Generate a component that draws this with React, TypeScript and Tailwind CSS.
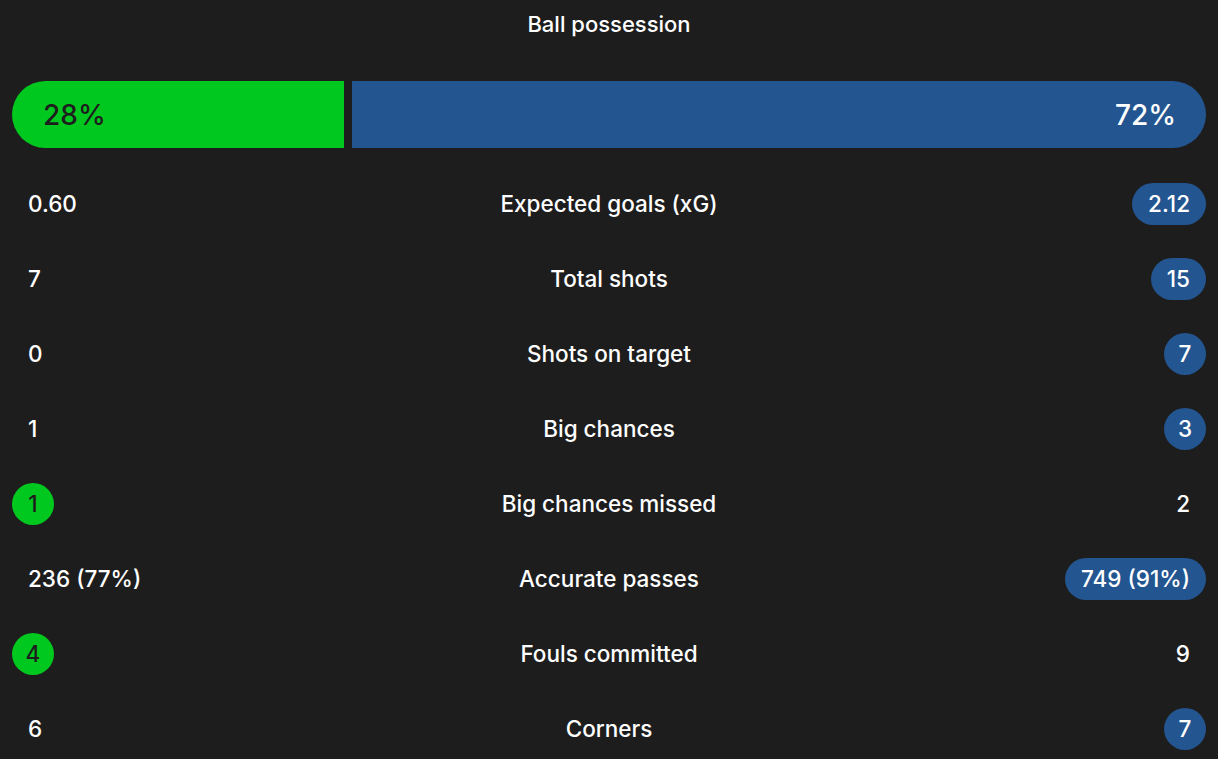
const home = 28;
const away = 72;

type Stat = {
  label: string;
  home: string;
  away: string;
  winner: 'home' | 'away';
};

const stats: Stat[] = [
  { label: 'Expected goals (xG)', home: '0.60', away: '2.12', winner: 'away' },
  { label: 'Total shots', home: '7', away: '15', winner: 'away' },
  { label: 'Shots on target', home: '0', away: '7', winner: 'away' },
  { label: 'Big chances', home: '1', away: '3', winner: 'away' },
  { label: 'Big chances missed', home: '1', away: '2', winner: 'home' },
  { label: 'Accurate passes', home: '236 (77%)', away: '749 (91%)', winner: 'away' },
  { label: 'Fouls committed', home: '4', away: '9', winner: 'home' },
  { label: 'Corners', home: '6', away: '7', winner: 'away' },
];

function Value({ value, highlight, side }: { value: string; highlight: boolean; side: 'home' | 'away' }) {
  if (!highlight) {
    return <span className="flex h-[42px] items-center px-4 text-white">{value}</span>;
  }
  const color = side === 'home' ? 'bg-[#00c81e] text-[#1d1d1d]' : 'bg-[#235591] text-white';
  const size = value.length === 1 ? 'w-[42px]' : 'px-4';
  return (
    <span className={`flex h-[42px] items-center justify-center rounded-full ${size} ${color}`}>
      {value}
    </span>
  );
}

export default function App() {
  return (
    <main
      className="min-h-screen bg-[#1d1d1d] px-3 text-white"
      style={{ fontFamily: 'Inter, "Noto Sans", sans-serif' }}
    >
      <h2 className="flex h-12 items-center justify-center text-[22px] font-medium">Ball possession</h2>

      <div className="mt-[33px] flex h-[67px] gap-2 text-[28px] font-medium">
        <div
          className="flex shrink-0 items-center rounded-l-full bg-[#00c81e] pl-[31px] text-[#1d1d1d]"
          style={{ width: `calc((100% - 8px) * ${home / 100})` }}
        >
          {home}%
        </div>
        <div className="flex flex-1 items-center justify-end rounded-r-full bg-[#235591] pr-[30px]">
          {away}%
        </div>
      </div>

      <div className="mt-[18px] text-[22.5px] font-medium">
        {stats.map((s) => (
          <div key={s.label} className="grid h-[75px] grid-cols-[1fr_auto_1fr] items-center">
            <div className="flex justify-start">
              <Value value={s.home} highlight={s.winner === 'home'} side="home" />
            </div>
            <div className="text-center">{s.label}</div>
            <div className="flex justify-end">
              <Value value={s.away} highlight={s.winner === 'away'} side="away" />
            </div>
          </div>
        ))}
      </div>
    </main>
  );
}
